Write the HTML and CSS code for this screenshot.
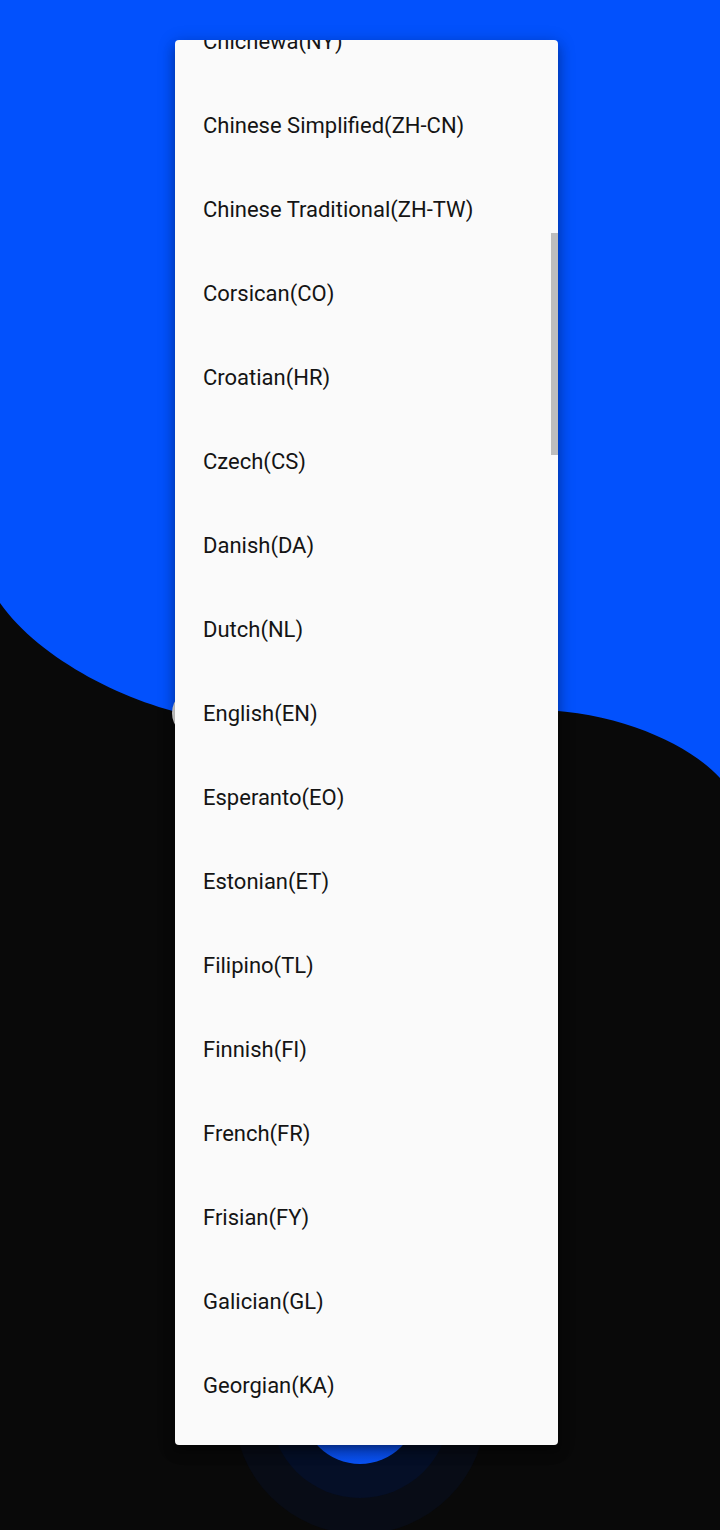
FILE: index.html
```html
<!DOCTYPE html>
<html lang="en">
<head>
<meta charset="utf-8">
<title>Language picker</title>
<link rel="stylesheet" href="styles.css">
</head>
<body>
<div class="screen">
  <svg class="backdrop" width="720" height="1530" viewBox="0 0 720 1530" aria-hidden="true">
    <defs>
      <linearGradient id="micGrad" x1="0" y1="0" x2="0" y2="1">
        <stop offset="0" stop-color="#0033b0"/>
        <stop offset="1" stop-color="#0a52f4"/>
      </linearGradient>
    </defs>
    <rect width="720" height="1530" fill="#090909"/>
    <path d="M0,0 H720 V778 C690,745 620,712 540,710 L200,717 C130,705 40,660 0,603 Z" fill="#0251fd"/>
    <circle cx="360" cy="1408" r="126" fill="#080c16"/>
    <circle cx="360" cy="1408" r="90" fill="#050f27"/>
    <circle cx="360" cy="1406" r="58" fill="url(#micGrad)"/>
  </svg>

  <div class="content">
    <div class="lang-field"></div>
  </div>

  <div class="menu-layer">
    <div class="menu">
      <ul class="menu-list">
        <li class="menu-item">Chichewa(NY)</li>
        <li class="menu-item">Chinese Simplified(ZH-CN)</li>
        <li class="menu-item">Chinese Traditional(ZH-TW)</li>
        <li class="menu-item">Corsican(CO)</li>
        <li class="menu-item">Croatian(HR)</li>
        <li class="menu-item">Czech(CS)</li>
        <li class="menu-item">Danish(DA)</li>
        <li class="menu-item">Dutch(NL)</li>
        <li class="menu-item">English(EN)</li>
        <li class="menu-item">Esperanto(EO)</li>
        <li class="menu-item">Estonian(ET)</li>
        <li class="menu-item">Filipino(TL)</li>
        <li class="menu-item">Finnish(FI)</li>
        <li class="menu-item">French(FR)</li>
        <li class="menu-item">Frisian(FY)</li>
        <li class="menu-item">Galician(GL)</li>
        <li class="menu-item">Georgian(KA)</li>
      </ul>
      <div class="scrollbar"></div>
    </div>
  </div>
</div>
</body>
</html>
```

FILE: styles.css
```css
html, body {
  margin: 0;
  padding: 0;
  background: #090909;
}

.screen {
  width: 720px;
  height: 1530px;
  display: grid;
  overflow: hidden;
  font-family: Roboto, "Noto Sans", sans-serif;
}

.screen > * {
  grid-area: 1 / 1;
}

.backdrop {
  display: block;
}

.content {
  padding: 688px 0 0 172px;
}

.lang-field {
  width: 376px;
  height: 50px;
  border-radius: 25px;
  background: #e4e4e4;
}

.menu-layer {
  padding: 40px 0 0 175px;
}

.menu {
  position: relative;
  width: 383px;
  height: 1405px;
  background: #fafafa;
  border-radius: 4px;
  overflow: hidden;
  box-shadow: 0 5px 6px -3px rgba(0, 0, 0, 0.25),
              0 8px 12px 1px rgba(0, 0, 0, 0.18),
              0 3px 16px 3px rgba(0, 0, 0, 0.16);
}

.menu-list {
  list-style: none;
  margin: -41px 0 0 0;
  padding: 0;
}

.menu-item {
  height: 84px;
  display: flex;
  align-items: center;
  padding-left: 28px;
  font-size: 22px;
  color: #141414;
  white-space: nowrap;
}

.scrollbar {
  position: absolute;
  top: 193px;
  right: 0;
  width: 7px;
  height: 222px;
  background: #bdbdbd;
}
```
